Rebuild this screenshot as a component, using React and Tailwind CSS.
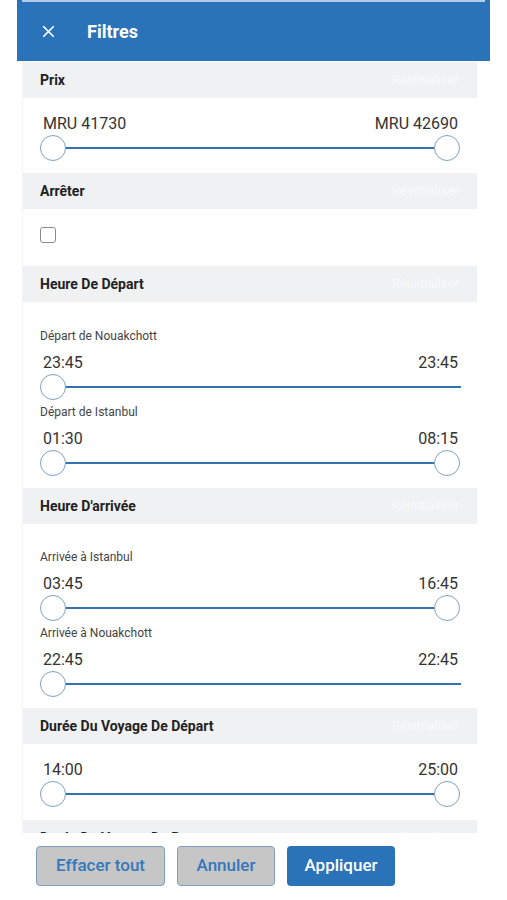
import { X } from 'lucide-react';

const font = { fontFamily: 'Roboto, "Liberation Sans", sans-serif' };

function SectionHead({ title }) {
  return (
    <div className="h-[36px] bg-[#f0f1f3] flex items-center justify-between pl-[17px] pr-[18px]">
      <span className="text-[14px] font-bold text-[#222]">{title}</span>
      <span className="text-[13px] text-[#f9fafb]">Réinitialiser</span>
    </div>
  );
}

function Slider({ right = true }) {
  return (
    <div className="relative h-[26px] ml-[17px] mr-[17px]">
      <div className={`absolute top-[12px] left-[13px] h-[2px] bg-[#3572b0] ${right ? 'right-[13px]' : 'right-[-1px]'}`} />
      <div className="absolute left-0 top-0 w-[26px] h-[26px] rounded-full bg-white border-[1.5px] border-[#7ea2c4]" />
      {right && <div className="absolute right-0 top-0 w-[26px] h-[26px] rounded-full bg-white border-[1.5px] border-[#7ea2c4]" />}
    </div>
  );
}

function Values({ min, max }) {
  return (
    <div className="flex justify-between pl-[20px] pr-[19px] text-[16px] leading-[20px] text-[#333]">
      <span>{min}</span>
      <span>{max}</span>
    </div>
  );
}

function SubRange({ label, min, max, right }) {
  return (
    <div>
      <div className="pl-[17px] text-[12px] leading-[16px] text-[#444]">{label}</div>
      <div className="mt-[9px]"><Values min={min} max={max} /></div>
      <div className="mt-[1px]"><Slider right={right} /></div>
    </div>
  );
}

export default function App() {
  return (
    <div className="w-[507px] h-[900px] bg-white flex flex-col overflow-hidden" style={font}>
      <div className="mx-[17px] h-[61px] bg-[#2a73b8] shrink-0">
        <div className="mx-[5px] h-[2px] bg-[#b3cde8]" />
        <div className="flex items-center h-[59px] pl-[22px]">
          <X size={19} strokeWidth={2.2} className="text-white" />
          <span className="ml-[29px] text-white text-[18px] font-bold">Filtres</span>
        </div>
      </div>

      <div className="flex-1 overflow-hidden ml-[22px] mr-[30px] pt-[1px] border-l border-[#f4f4f4]">
        <SectionHead title="Prix" />
        <div className="pt-[16px] pb-[12px]">
          <Values min="MRU 41730" max="MRU 42690" />
          <div className="mt-[1px]"><Slider /></div>
        </div>

        <SectionHead title="Arrêter" />
        <div className="h-[57px] pt-[18px] pl-[17px]">
          <div className="w-[16px] h-[16px] rounded-[3px] border-[1.5px] border-[#8a8a8a] bg-white" />
        </div>

        <SectionHead title="Heure De Départ" />
        <div className="pt-[26px] pb-[12px] flex flex-col gap-[4px]">
          <SubRange label="Départ de Nouakchott" min="23:45" max="23:45" right={false} />
          <SubRange label="Départ de Istanbul" min="01:30" max="08:15" />
        </div>

        <SectionHead title="Heure D'arrivée" />
        <div className="pt-[25px] pb-[11px] flex flex-col gap-[4px]">
          <SubRange label="Arrivée à Istanbul" min="03:45" max="16:45" />
          <SubRange label="Arrivée à Nouakchott" min="22:45" max="22:45" right={false} />
        </div>

        <SectionHead title="Durée Du Voyage De Départ" />
        <div className="pt-[16px] pb-[13px]">
          <Values min="14:00" max="25:00" />
          <div className="mt-[1px]"><Slider /></div>
        </div>

        <SectionHead title="Durée Du Voyage De Retour" />
      </div>

      <div className="h-[67px] shrink-0 bg-white pt-[13px] pl-[36px] flex gap-[12px]">
        <button className="h-[40px] w-[129px] rounded-[4px] bg-[#c6c6c6] border border-[#7e9fc0] text-[#3477bd] text-[17px] font-medium">Effacer tout</button>
        <button className="h-[40px] w-[98px] rounded-[4px] bg-[#c6c6c6] border border-[#7e9fc0] text-[#3477bd] text-[17px] font-medium">Annuler</button>
        <button className="h-[40px] w-[108px] rounded-[4px] bg-[#2a73b8] text-white text-[17px] font-medium">Appliquer</button>
      </div>
    </div>
  );
}
